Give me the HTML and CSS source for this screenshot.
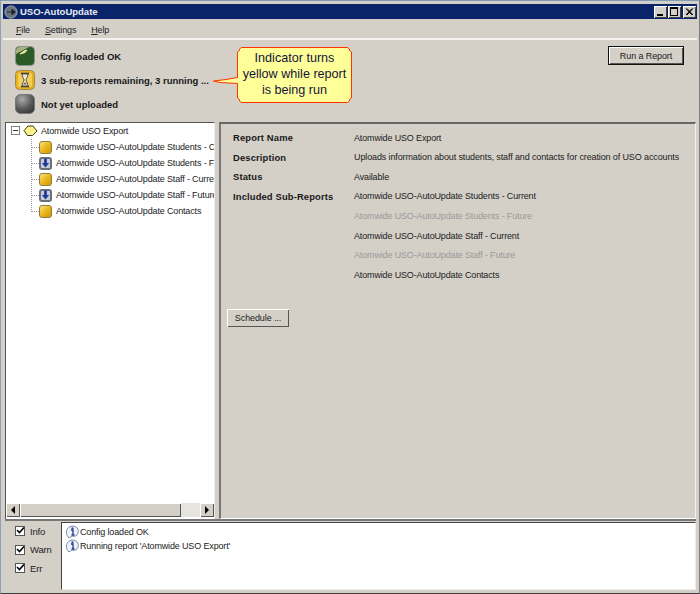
FILE: index.html
```html
<!DOCTYPE html>
<html lang="en">
<head>
<meta charset="utf-8">
<title>USO-AutoUpdate</title>
<link rel="stylesheet" href="styles.css">
</head>
<body>
<div class="window">
  <div class="titlebar">
    <svg class="app-icon" width="14" height="14" viewBox="0 0 16 16"><circle cx="8" cy="8" r="7" fill="#6d7480" stroke="#aab0b8"/><path d="M3 8h6V5l4 3-4 3V8" fill="#1c2430" stroke="#1c2430"/></svg>
    <span class="title-text">USO-AutoUpdate</span>
    <div class="caption-buttons">
      <span class="cap-btn"><svg width="13" height="12" viewBox="0 0 13 12"><rect x="3" y="8" width="6" height="2" fill="#000"/></svg></span>
      <span class="cap-btn"><svg width="13" height="12" viewBox="0 0 13 12"><path d="M2 1.500h8M2 2.500h8M2.500 2v8M2 9.500h8M9.500 2v8" stroke="#000" fill="none"/></svg></span>
      <span class="cap-btn cap-close"><svg width="13" height="12" viewBox="0 0 13 12"><path d="M3 2.500l6 6.500M4 2.500l6 6.500M9 2.500L3 9M10 2.500L4 9" stroke="#000" fill="none"/></svg></span>
    </div>
  </div>
  <div class="menubar">
    <span class="menu-item"><u>F</u>ile</span>
    <span class="menu-item"><u>S</u>ettings</span>
    <span class="menu-item"><u>H</u>elp</span>
  </div>
  <div class="status-area">
    <div class="indicators">
      <div class="indicator">
        <svg class="ind-icon" width="20" height="20" viewBox="0 0 20 20"><rect x=".5" y=".5" width="19" height="19" rx="4" fill="#2a5a26" stroke="#8f948c"/><path d="M1 8V5c0-2 2-4 4-4h9C10 3 5 6 1 8z" fill="#a8b080"/><path d="M5 8l4-3 3-1-2 2.500z" fill="#f4f0a0" stroke="#f4f0a0"/></svg>
        <span>Config loaded OK</span>
      </div>
      <div class="indicator">
        <svg class="ind-icon" width="20" height="20" viewBox="0 0 20 20"><rect x=".5" y=".5" width="19" height="19" rx="4" fill="#e8b020" stroke="#9c8a50"/><rect x="3" y="3" width="14" height="14" rx="2" fill="#f6cf52"/><path d="M6 3.500h8M6 16.500h8" stroke="#333" stroke-width="1.500"/><path d="M7 4h6c0 3-2 4.500-2 6s2 3 2 6H7c0-3 2-4.500 2-6S7 7 7 4z" fill="#f0ead8" stroke="#555"/><path d="M8 14.500L10 12l2 2.500z" fill="#7a6a40"/></svg>
        <span>3 sub-reports remaining, 3 running ...</span>
      </div>
      <div class="indicator">
        <svg class="ind-icon" width="20" height="20" viewBox="0 0 20 20"><defs><radialGradient id="grey" cx=".35" cy=".25" r=".9"><stop offset="0" stop-color="#aaa"/><stop offset=".6" stop-color="#555"/><stop offset="1" stop-color="#333"/></radialGradient></defs><rect x=".5" y=".5" width="19" height="19" rx="5" fill="url(#grey)" stroke="#777"/></svg>
        <span>Not yet uploaded</span>
      </div>
    </div>
    <button class="btn btn-default" type="button">Run a Report</button>
  </div>
  <div class="main">
    <div class="tree-pane">
      <div class="tree">
        <div class="tree-root">
          <span class="expander"></span>
          <svg class="root-icon" width="15" height="12" viewBox="0 0 15 12"><path d="M1 5.500L5 1h5l4 5-4.500 4.500h-5z" fill="#fbf08a" stroke="#3a3a20"/></svg>
          <span>Atomwide USO Export</span>
        </div>
        <div class="tree-children">
          <div class="tree-node"><i class="dash"></i><span class="node-icon node-yellow"></span><span class="node-label">Atomwide USO-AutoUpdate Students - Current</span></div>
          <div class="tree-node"><i class="dash"></i><span class="node-icon node-blue"><svg width="9" height="10" viewBox="0 0 10 10"><path d="M3.500 0h3v5H9L5 10 1 5h2.500z" fill="#1b3a94"/></svg></span><span class="node-label">Atomwide USO-AutoUpdate Students - Future</span></div>
          <div class="tree-node"><i class="dash"></i><span class="node-icon node-yellow"></span><span class="node-label">Atomwide USO-AutoUpdate Staff - Current</span></div>
          <div class="tree-node"><i class="dash"></i><span class="node-icon node-blue"><svg width="9" height="10" viewBox="0 0 10 10"><path d="M3.500 0h3v5H9L5 10 1 5h2.500z" fill="#1b3a94"/></svg></span><span class="node-label">Atomwide USO-AutoUpdate Staff - Future</span></div>
          <div class="tree-node"><i class="dash"></i><span class="node-icon node-yellow"></span><span class="node-label">Atomwide USO-AutoUpdate Contacts</span></div>
        </div>
      </div>
      <div class="hscroll">
        <span class="scroll-btn"><i class="arrow-left"></i></span>
        <span class="scroll-thumb"></span>
        <span class="scroll-track"></span>
        <span class="scroll-btn"><i class="arrow-right"></i></span>
      </div>
    </div>
    <div class="detail-pane">
      <div class="detail-grid">
        <b>Report Name</b><span>Atomwide USO Export</span>
        <b>Description</b><span class="desc">Uploads information about students, staff and contacts for creation of USO accounts</span>
        <b>Status</b><span>Available</span>
        <b>Included Sub-Reports</b><span>Atomwide USO-AutoUpdate Students - Current</span>
        <b></b><span class="muted">Atomwide USO-AutoUpdate Students - Future</span>
        <b></b><span>Atomwide USO-AutoUpdate Staff - Current</span>
        <b></b><span class="muted">Atomwide USO-AutoUpdate Staff - Future</span>
        <b></b><span>Atomwide USO-AutoUpdate Contacts</span>
      </div>
      <button class="btn btn-schedule" type="button">Schedule ...</button>
    </div>
  </div>
  <div class="log-area">
    <div class="filters">
      <label class="filter"><span class="check"><svg width="9" height="9" viewBox="0 0 9 9"><path d="M1 4l2.500 2.500L8 1.500" stroke="#000" stroke-width="1.600" fill="none"/></svg></span>Info</label>
      <label class="filter"><span class="check"><svg width="9" height="9" viewBox="0 0 9 9"><path d="M1 4l2.500 2.500L8 1.500" stroke="#000" stroke-width="1.600" fill="none"/></svg></span>Warn</label>
      <label class="filter"><span class="check"><svg width="9" height="9" viewBox="0 0 9 9"><path d="M1 4l2.500 2.500L8 1.500" stroke="#000" stroke-width="1.600" fill="none"/></svg></span>Err</label>
    </div>
    <div class="log">
      <div class="log-line"><svg width="15" height="14" viewBox="0 0 15 14"><path d="M3 12C0 8 1 2 7 1c6 0 8 5 5 9-1 1-3 2-5 1l-3 2z" fill="#eef2f8" stroke="#7d8ea8"/><path d="M6 5h2v5h1M6.500 10h3" stroke="#1b3a94" stroke-width="1.300" fill="none"/><rect x="6.500" y="2.500" width="2" height="1.600" fill="#1b3a94"/></svg><span>Config loaded OK</span></div>
      <div class="log-line"><svg width="15" height="14" viewBox="0 0 15 14"><path d="M3 12C0 8 1 2 7 1c6 0 8 5 5 9-1 1-3 2-5 1l-3 2z" fill="#eef2f8" stroke="#7d8ea8"/><path d="M6 5h2v5h1M6.500 10h3" stroke="#1b3a94" stroke-width="1.300" fill="none"/><rect x="6.500" y="2.500" width="2" height="1.600" fill="#1b3a94"/></svg><span>Running report 'Atomwide USO Export'</span></div>
    </div>
  </div>
  <div class="callout">
    <svg class="callout-shape" width="142" height="60" viewBox="0 0 142 60"><path d="M29.500 1.500H135.500l2 1.500v1.500l2 1.500V52l-2 1.500V55l-2 1.500H29.500l-2-1.500v-1.500l-2-1.500V37.500L8 36.500 1.500 35 14 33.500l11.500-2V6l2-1.500V3z" fill="#ffff99" stroke="#ff3300"/></svg>
    <div class="callout-text">Indicator turns<br>yellow while report<br>is being run</div>
  </div>
</div>
</body>
</html>
```
FILE: styles.css
```css
* { box-sizing: border-box; }
html, body { margin: 0; padding: 0; }
body { width: 700px; height: 594px; overflow: hidden; background: #d4d0c8; font-family: "Liberation Sans", Arial, sans-serif; font-size: 9px; letter-spacing: -.15px; color: #111; }
.window { position: relative; width: 700px; height: 594px; display: flex; flex-direction: column; background: #d4d0c8; border: 1px solid #404040; border-left-color: #8fa0b4; border-top-color: #7f9db9; border-right-color: #7f7f7f; padding: 3px; }
.titlebar { flex: none; height: 15px; margin: 0 -1px; display: flex; align-items: center; background: #0a246a; color: #fff; font-weight: bold; font-size: 9.500px; padding-left: 1px; }
.app-icon { width: 14px; height: 14px; margin-right: 2px; }
.title-text { color: #e8ecf4; letter-spacing: 0; margin-top: -1px; }
.caption-buttons { margin-left: auto; display: flex; gap: 1px; margin-right: 1px; }
.cap-btn { width: 13px; height: 12px; background: #d4d0c8; display: block; box-shadow: inset 1px 1px 0 #fff, inset -1px -1px 0 #404040; }
.cap-btn svg { display: block; }
.cap-close { margin-left: 1px; }
.menubar { flex: none; height: 21px; display: flex; align-items: center; padding-top: 3px; padding-left: 13px; gap: 15px; color: #222; border-bottom: 2px solid #fff; margin: 0 -1px; border-image: linear-gradient(#9a9890 50%, #f3f2ee 50%) 2; }
.menu-item { display: block; }
.status-area { flex: none; height: 82px; display: flex; justify-content: space-between; padding: 6px 12px 0 11px; }
.indicators { display: flex; flex-direction: column; gap: 4px; }
.indicator { display: flex; align-items: center; height: 20px; font-weight: bold; font-size: 9.500px; letter-spacing: 0; color: #181818; gap: 6px; }
.indicator span { margin-top: 1px; }
.ind-icon { flex: none; }
.btn { font-family: inherit; font-size: 9px; letter-spacing: -.1px; color: #222; background: #d4d0c8; border: 0; padding: 0; display: block; }
.btn-default { width: 76px; height: 19px; border: 1px solid #111; box-shadow: inset 1px 1px 0 #fff, inset -1px -1px 0 #555; }
.main { flex: 1; min-height: 0; display: flex; gap: 4px; padding-left: 1px; }
.tree-pane { width: 210px; flex: none; display: flex; flex-direction: column; background: #fff; border: 1px solid #555; border-right-color: #eee; border-bottom: 0; }
.tree { flex: 1; padding: 0 0 0 5px; overflow: hidden; }
.tree-root { display: flex; align-items: center; height: 15px; gap: 3px; white-space: nowrap; color: #222; }
.expander { flex: none; width: 9px; height: 9px; border: 1px solid #808080; background: linear-gradient(#333, #333) center / 5px 1px no-repeat #fff; }
.root-icon { flex: none; }
.tree-children { margin: 1px 0 0 20px; border-left: 1px dotted #999; height: 73px; }
.tree-node { display: flex; align-items: center; height: 16.100px; white-space: nowrap; overflow: hidden; color: #222; }
.dash { flex: none; width: 7px; border-top: 1px dotted #999; }
.node-icon { flex: none; width: 13px; height: 13px; border-radius: 3px; display: flex; align-items: center; justify-content: center; margin-right: 4px; }
.node-yellow { background: linear-gradient(135deg, #fbe07c, #e8b010 60%, #c99a10); border: 1px solid #8e7c3c; }
.node-blue { background: #c8ccd8; border: 2px solid #6b7080; }
.node-label { display: block; }
.hscroll { flex: none; height: 14px; margin-bottom: 2px; background: #ece9e2; display: flex; }
.scroll-btn { flex: none; width: 14px; height: 14px; background: #d4d0c8; box-shadow: inset 1px 1px 0 #fff, inset -1px -1px 0 #555; display: flex; align-items: center; justify-content: center; }
.scroll-thumb { flex: none; width: 161px; background: #d4d0c8; box-shadow: inset 1px 1px 0 #fff, inset -1px -1px 0 #555; }
.scroll-track { flex: 1; background: #e6e4de; }
.arrow-left { border: 4px solid transparent; border-right-color: #000; border-left: 0; }
.arrow-right { border: 4px solid transparent; border-left-color: #000; border-right: 0; }
.detail-pane { flex: 1; border: 1px solid #fff; border-top: 2px solid #666; border-left: 2px solid #777; border-right: 1px solid #f2f2f2; padding: 4px 0 0 6px; }
.detail-grid { display: grid; grid-template-columns: 121px 1fr; grid-auto-rows: 19.560px; align-items: center; padding-left: 6px; color: #222; }
.detail-grid b { font-weight: bold; font-size: 9.400px; letter-spacing: .15px; color: #181818; }
.detail-grid span { white-space: nowrap; }
.desc { letter-spacing: -.12px; }
.muted { color: #9a9a9a; }
.btn-schedule { width: 62px; height: 18px; margin-top: 25px; box-shadow: inset 1px 1px 0 #fff, inset -1px -1px 0 #555; }
.log-area { flex: none; height: 71px; display: flex; border-top: 2px solid #777; padding-top: 1px; margin-left: 1px; }
.filters { flex: none; width: 56px; display: flex; flex-direction: column; gap: 4px; padding: 2px 0 0 10px; }
.filter { display: flex; align-items: center; height: 14.500px; gap: 5px; color: #222; font-size: 9.500px; }
.check { flex: none; width: 10px; height: 10px; background: #fff; border: 1px solid #555; display: block; }
.check svg { display: block; margin-top: -1px; }
.log { flex: 1; background: #fff; border: 1px solid #444; border-right-color: #eee; border-bottom-color: #eee; padding: 2px 0 0 3px; }
.log-line { display: flex; align-items: center; height: 14px; color: #222; }
.callout { position: absolute; left: 211px; top: 45px; width: 142px; height: 60px; }
.callout-shape { position: absolute; left: 0; top: 0; display: block; }
.callout-text { position: absolute; left: 25px; top: 4px; width: 115px; text-align: center; font-size: 12.600px; line-height: 16px; letter-spacing: 0; color: #14143c; white-space: nowrap; }
```
